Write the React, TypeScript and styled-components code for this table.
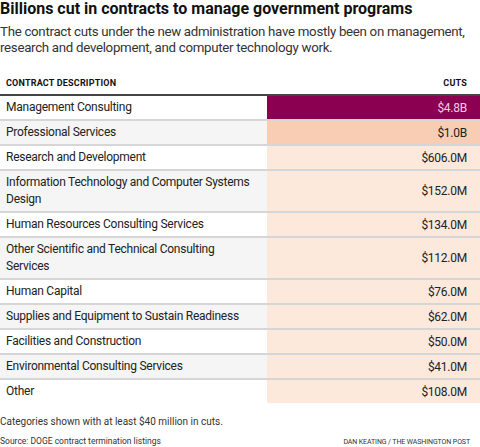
import React from "react";
import styled, { createGlobalStyle } from "styled-components";

const GlobalStyle = createGlobalStyle`
  body {
    margin: 0;
    background: #fff;
    font-family: Roboto, "Liberation Sans", sans-serif;
    color: #222;
  }
`;

const Page = styled.div`
  width: 480px;
  display: flex;
  flex-direction: column;
`;

const Title = styled.h1`
  margin: 0;
  font-size: 16px;
  line-height: 18px;
  font-weight: 700;
  color: #111;
`;

const Subtitle = styled.p`
  margin: 6px 0 0;
  font-size: 13.3px;
  line-height: 16px;
  letter-spacing: -0.3px;
  color: #333;
`;

const HeaderRow = styled.div`
  display: flex;
  justify-content: space-between;
  align-items: center;
  height: 22px;
  margin-top: 16px;
  padding: 0 13px 0 6px;
  border-bottom: 2px solid #444;
`;

const HeaderLabel = styled.span`
  font-size: 9px;
  font-weight: 700;
  letter-spacing: 0.2px;
  color: #111;
  text-transform: uppercase;
`;

const Table = styled.div`
  display: flex;
  flex-direction: column;
`;

const Row = styled.div<{ $shaded: boolean }>`
  display: flex;
  border-bottom: 2px solid #d6d6d6;
  background: ${({ $shaded }) => ($shaded ? "#f5f5f5" : "#fff")};

  &:last-child {
    border-bottom-color: transparent;
  }
`;

const Label = styled.div`
  flex: 0 0 250px;
  padding: 3px 11px 3px 6px;
  font-size: 12px;
  line-height: 17px;
  letter-spacing: -0.25px;
  color: #222;
`;

const Value = styled.div<{ $bg: string; $fg: string }>`
  flex: 1;
  display: flex;
  align-items: center;
  justify-content: flex-end;
  padding: 0 13px;
  font-size: 12px;
  letter-spacing: -0.25px;
  background: ${({ $bg }) => $bg};
  color: ${({ $fg }) => $fg};
`;

const Note = styled.p`
  margin: 10px 0 0;
  font-size: 10px;
  line-height: 14px;
  color: #333;
`;

const Credits = styled.div`
  display: flex;
  justify-content: space-between;
  align-items: baseline;
  margin-top: 6px;
  padding-right: 10px;
  line-height: 12px;
`;

const Source = styled.span`
  font-size: 8.5px;
  color: #333;
`;

const Byline = styled.span`
  font-size: 7px;
  letter-spacing: -0.1px;
  color: #333;
  text-transform: uppercase;
`;

type Cut = { label: string; value: string; tier: 0 | 1 | 2 };

const cuts: Cut[] = [
  { label: "Management Consulting", value: "$4.8B", tier: 0 },
  { label: "Professional Services", value: "$1.0B", tier: 1 },
  { label: "Research and Development", value: "$606.0M", tier: 2 },
  { label: "Information Technology and Computer Systems Design", value: "$152.0M", tier: 2 },
  { label: "Human Resources Consulting Services", value: "$134.0M", tier: 2 },
  { label: "Other Scientific and Technical Consulting Services", value: "$112.0M", tier: 2 },
  { label: "Human Capital", value: "$76.0M", tier: 2 },
  { label: "Supplies and Equipment to Sustain Readiness", value: "$62.0M", tier: 2 },
  { label: "Facilities and Construction", value: "$50.0M", tier: 2 },
  { label: "Environmental Consulting Services", value: "$41.0M", tier: 2 },
  { label: "Other", value: "$108.0M", tier: 2 },
];

const tierColors = [
  { bg: "#8b0050", fg: "#f3cde0" },
  { bg: "#f8cdb4", fg: "#222" },
  { bg: "#fde8dc", fg: "#222" },
];

export default function App() {
  return (
    <Page>
      <GlobalStyle />
      <Title>Billions cut in contracts to manage government programs</Title>
      <Subtitle>
        The contract cuts under the new administration have mostly been on management,
        research and development, and computer technology work.
      </Subtitle>
      <HeaderRow>
        <HeaderLabel>Contract description</HeaderLabel>
        <HeaderLabel>Cuts</HeaderLabel>
      </HeaderRow>
      <Table>
        {cuts.map((c, i) => (
          <Row key={c.label} $shaded={i % 2 === 1}>
            <Label>{c.label}</Label>
            <Value $bg={tierColors[c.tier].bg} $fg={tierColors[c.tier].fg}>
              {c.value}
            </Value>
          </Row>
        ))}
      </Table>
      <Note>Categories shown with at least $40 million in cuts.</Note>
      <Credits>
        <Source>Source: DOGE contract termination listings</Source>
        <Byline>Dan Keating / The Washington Post</Byline>
      </Credits>
    </Page>
  );
}
